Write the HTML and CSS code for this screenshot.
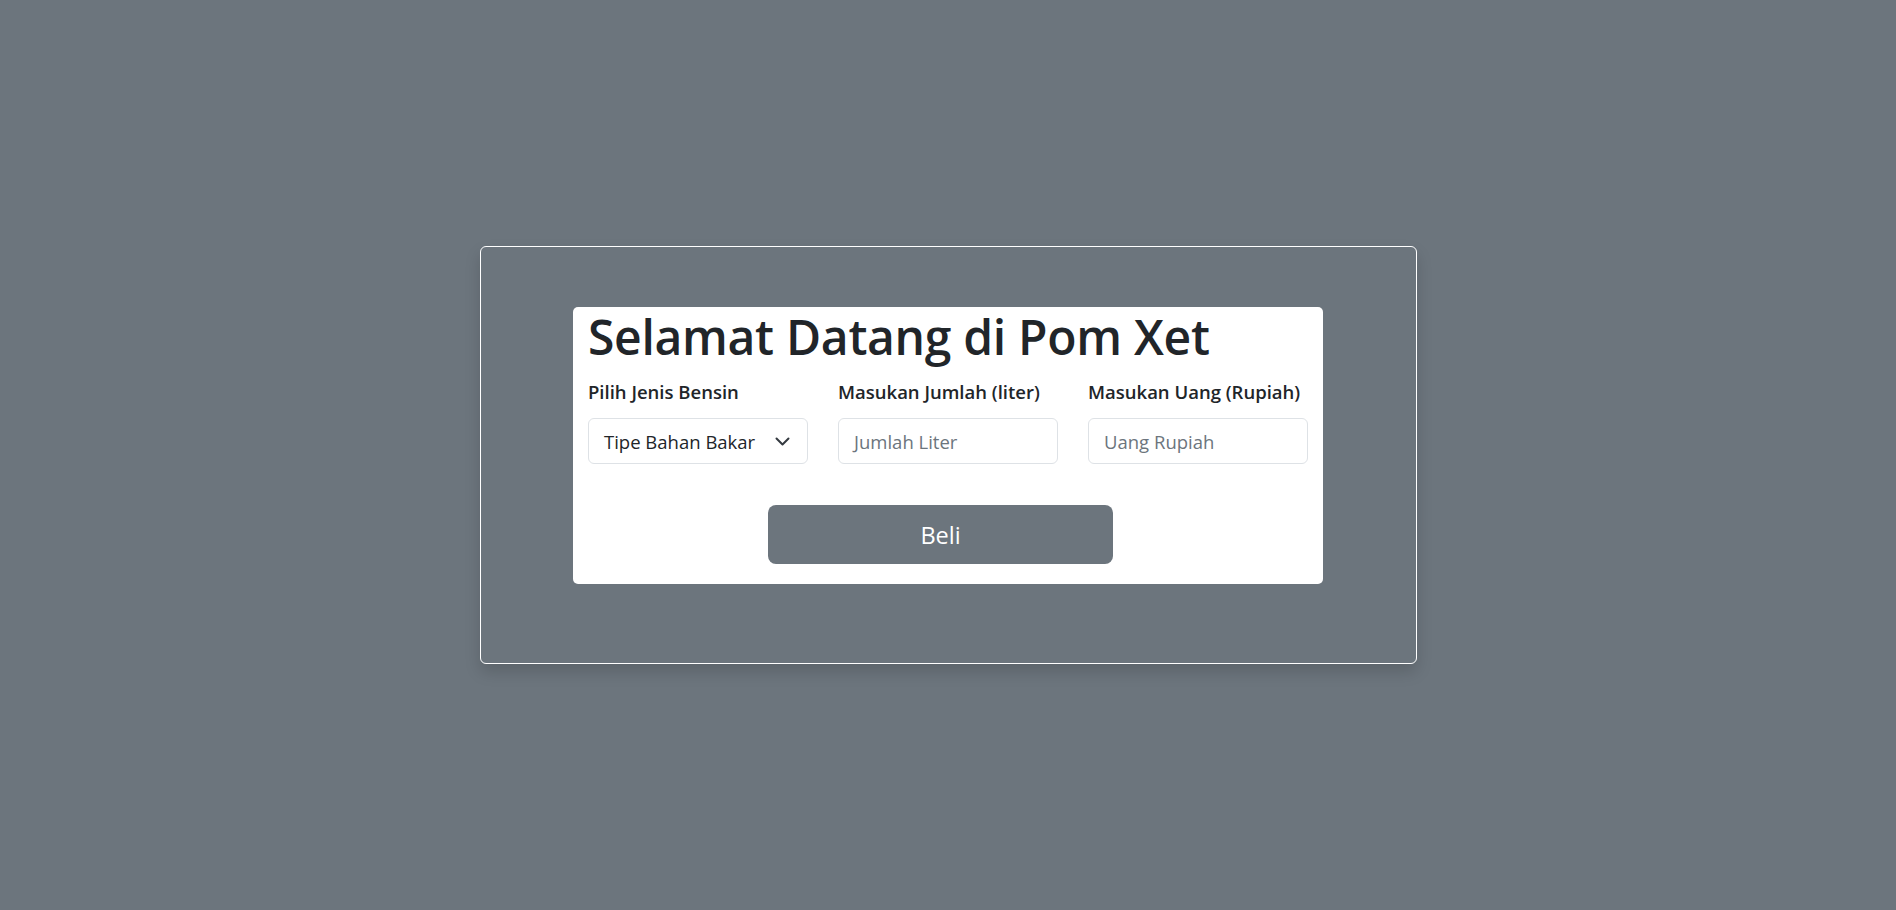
FILE: index.html
```html
<!DOCTYPE html>
<html lang="id">
<head>
<meta charset="utf-8">
<title>Pom Xet</title>
<link rel="stylesheet" href="styles.css">
</head>
<body>
<div class="page">
  <div class="frame">
    <div class="panel">
      <h1 class="title">Selamat Datang di Pom Xet</h1>
      <div class="fields">
        <div class="field">
          <label class="label">Pilih Jenis Bensin</label>
          <div class="control select">
            <span class="value">Tipe Bahan Bakar</span>
            <svg class="chev" width="15" height="9" viewBox="0 0 15 9"><path d="M1.5 1.5l6 6 6-6" fill="none" stroke="#343a40" stroke-width="2" stroke-linecap="round" stroke-linejoin="round"/></svg>
          </div>
        </div>
        <div class="field">
          <label class="label">Masukan Jumlah (liter)</label>
          <div class="control"><span class="placeholder">Jumlah Liter</span></div>
        </div>
        <div class="field">
          <label class="label">Masukan Uang (Rupiah)</label>
          <div class="control"><span class="placeholder">Uang Rupiah</span></div>
        </div>
      </div>
      <div class="actions">
        <button class="btn">Beli</button>
      </div>
    </div>
  </div>
</div>
</body>
</html>
```

FILE: styles.css
```css
* { box-sizing: border-box; }
html, body { margin: 0; padding: 0; }
body {
  background: #6c757d;
  font-family: "Open Sans", "Noto Sans", sans-serif;
  color: #212529;
}
.page {
  height: 910px;
  display: flex;
  align-items: center;
  justify-content: center;
}
.frame {
  width: 937px;
  height: 418px;
  border: 1px solid #ffffff;
  border-radius: 6px;
  box-shadow: 0 8px 16px rgba(0,0,0,0.15);
  padding-top: 60px;
  display: flex;
  flex-direction: column;
  align-items: center;
}
.panel {
  width: 750px;
  background: #ffffff;
  border-radius: 5px;
  padding: 0 15px 20px;
}
.title {
  margin: 0;
  font-size: 48px;
  font-weight: 600;
  line-height: 60px;
  letter-spacing: -0.3px;
}
.fields {
  display: grid;
  grid-template-columns: repeat(3, 220px);
  column-gap: 30px;
  margin-top: 13px;
}
.label {
  display: block;
  font-size: 18.5px;
  font-weight: 600;
  line-height: 24px;
  margin-bottom: 14px;
}
.control {
  height: 46px;
  border: 1px solid #dee2e6;
  border-radius: 6px;
  display: flex;
  align-items: center;
  padding: 0 15px;
  font-size: 18.5px;
}
.select { justify-content: space-between; padding-right: 17px; }
.value { color: #212529; }
.placeholder { color: #6c757d; }
.chev { display: block; }
.actions {
  margin-top: 41px;
  padding-left: 180px;
}
.btn {
  width: 345px;
  height: 59px;
  border: none;
  border-radius: 8px;
  background: #6c757d;
  color: #ffffff;
  font-family: inherit;
  font-size: 23.5px;
  display: block;
  padding: 0;
}
```
